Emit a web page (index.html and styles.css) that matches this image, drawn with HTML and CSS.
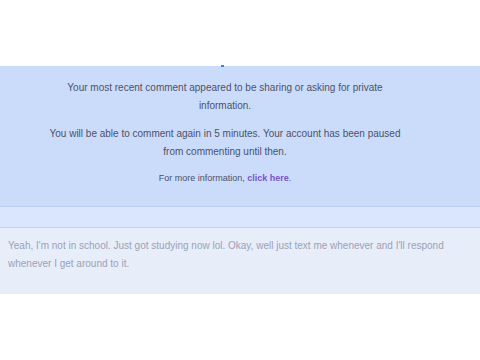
FILE: index.html
```html
<!DOCTYPE html>
<html>
<head>
<meta charset="utf-8">
<link rel="stylesheet" href="styles.css">
</head>
<body>
<div class="top"></div>
<section class="notice">
  <span class="marker"></span>
  <p class="msg">Your most recent comment appeared to be sharing or asking for private information.</p>
  <p class="msg">You will be able to comment again in 5 minutes. Your account has been paused from commenting until then.</p>
  <p class="more">For more information, <a class="link" href="#">click here</a>.</p>
</section>
<div class="band"></div>
<div class="comment">
  <p>Yeah, I'm not in school. Just got studying now lol. Okay, well just text me whenever and I'll respond whenever I get around to it.</p>
</div>
</body>
</html>
```
FILE: styles.css
```css
html, body {
  margin: 0;
  padding: 0;
  background: #ffffff;
  font-family: "Liberation Sans", Arial, sans-serif;
}
.top {
  height: 66px;
}
.notice {
  position: relative;
  background: #cbdcfa;
  border-bottom: 1px solid #bcd0f5;
  height: 141px;
  box-sizing: border-box;
  padding: 13px 75px 0 45px;
  text-align: center;
  color: #4d5168;
  font-size: 10px;
  line-height: 18px;
}
.marker {
  position: absolute;
  left: 221px;
  top: -1px;
  width: 3px;
  height: 2px;
  background: #3d7ef0;
}
.msg {
  margin: 0 0 10px;
}
.msg + .msg {
  margin-bottom: 8px;
}
.more {
  margin: 0;
  font-size: 9px;
}
.link {
  color: #7b52cc;
  font-weight: bold;
  text-decoration: none;
}
.band {
  height: 20px;
  background: #d9e6fd;
  border-bottom: 1px solid #c9d2e4;
}
.comment {
  background: #e7eefa;
  height: 66px;
  box-sizing: border-box;
  padding: 9px 8px 0;
  color: #9ba1b6;
  font-size: 10px;
  line-height: 18px;
}
.comment p {
  margin: 0;
}
```
